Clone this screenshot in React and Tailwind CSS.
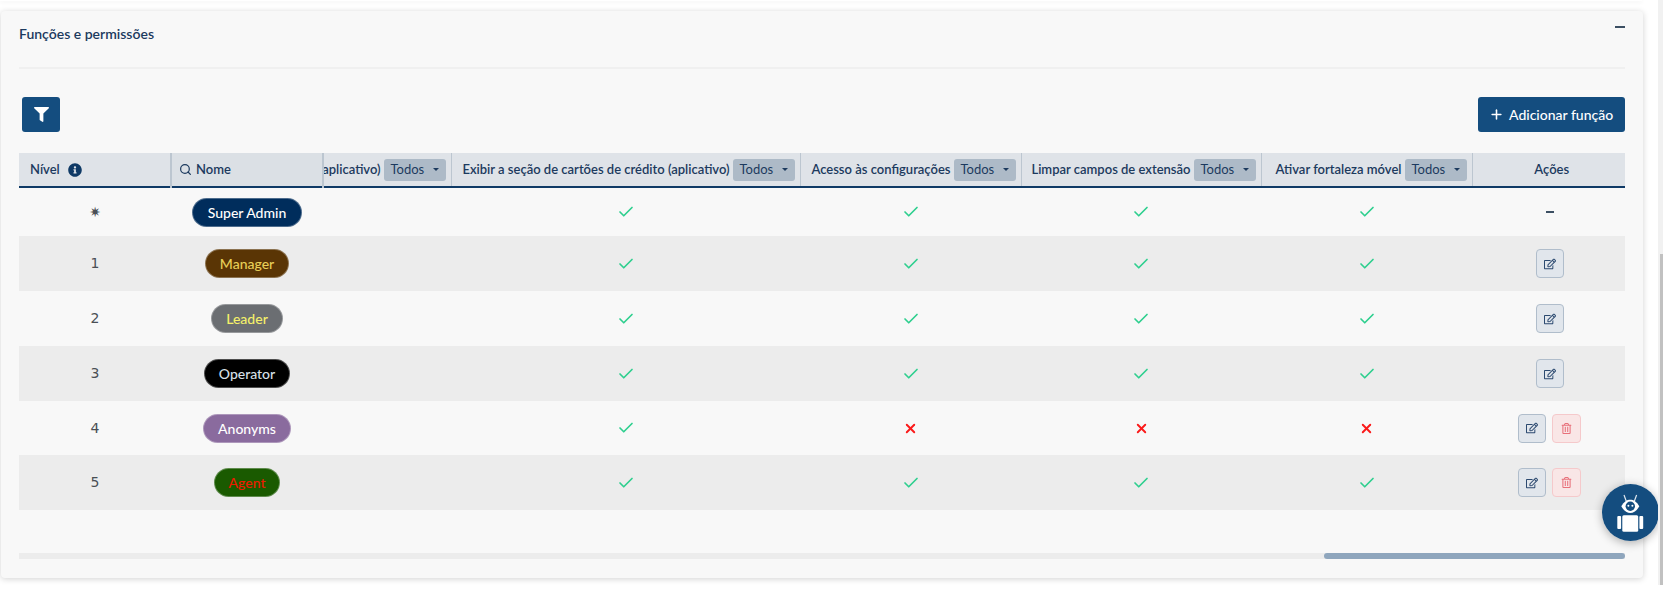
import React from "react";
import { Check, X, Plus, Search } from "lucide-react";
import { FaFilter, FaInfoCircle, FaRegEdit, FaRegTrashAlt } from "react-icons/fa";

const roles = [
  { level: "✷", name: "Super Admin", badge: "bg-[#002d5c] text-white px-[15px]", flags: [1, 1, 1, 1], actions: "none" },
  { level: "1", name: "Manager", badge: "bg-[#5a3505] text-[#e8cf58] px-[14px]", flags: [1, 1, 1, 1], actions: "edit" },
  { level: "2", name: "Leader", badge: "bg-[#6b6e72] text-[#f4f06a] px-[14px]", flags: [1, 1, 1, 1], actions: "edit" },
  { level: "3", name: "Operator", badge: "bg-black text-[#d8e0e8] px-[14px]", flags: [1, 1, 1, 1], actions: "edit" },
  { level: "4", name: "Anonyms", badge: "bg-[#8a6b9e] text-white px-[14px]", flags: [1, 0, 0, 0], actions: "both" },
  { level: "5", name: "Agent", badge: "bg-[#1a5a00] text-[#ee1a00] px-[14px]", flags: [1, 1, 1, 1], actions: "both" },
];

const rowHeights = ["h-[49px]", "h-[55px]", "h-[55px]", "h-[55px]", "h-[54px]", "h-[55px]"];

const columns = [
  "Exibir a seção de cartões de crédito (aplicativo)",
  "Acesso às configurações",
  "Limpar campos de extensão",
  "Ativar fortaleza móvel",
];

function TodosSelect() {
  return (
    <span className="flex h-[22px] w-[62px] shrink-0 items-center justify-between rounded-[3px] bg-[#adbac7] px-[7px] text-[13px] font-normal text-[#1c3a5e]">
      Todos
      <span className="h-0 w-0 border-x-[3px] border-t-[3px] border-x-transparent border-t-[#1c3a5e]" />
    </span>
  );
}

function EditButton() {
  return (
    <button className="flex h-[29px] w-[28px] items-center justify-center rounded-[4px] border border-[#b0bdcb] bg-[#e1e6ec] text-[#2c4a70]">
      <FaRegEdit size={12} />
    </button>
  );
}

function TrashButton() {
  return (
    <button className="flex h-[29px] w-[29px] items-center justify-center rounded-[4px] border border-[#f5c9cb] bg-[#f9e6e6] text-[#e8707a]">
      <FaRegTrashAlt size={11} />
    </button>
  );
}

function RobotIcon() {
  return (
    <svg width="57" height="57" viewBox="0 0 57 57">
      <circle cx="28.5" cy="28.5" r="28.5" fill="#144d7f" />
      <path d="M24.3 17.3 22 11M32.3 17.3 34.6 11" stroke="#dfe7ef" strokeWidth="1.2" />
      <path d="M19.3 22.3C22 17.5 25 15.7 28.3 15.7S34.6 17.5 37.3 22.3C34.6 27.2 31.6 29 28.3 29S22 27.2 19.3 22.3Z" fill="#fff" />
      <circle cx="28.3" cy="22.3" r="4.7" fill="#144d7f" />
      <circle cx="26.4" cy="21.8" r="1" fill="#fff" />
      <circle cx="30.4" cy="21.8" r="1" fill="#fff" />
      <rect x="20.3" y="31.3" width="15.9" height="16.4" rx="1.5" fill="#fff" />
      <rect x="15.3" y="32" width="3.8" height="13" rx="1" fill="#fff" />
      <rect x="37.4" y="32" width="3.8" height="13" rx="1" fill="#fff" />
    </svg>
  );
}

export default function App() {
  return (
    <div className="relative h-[602px] w-[1663px] overflow-hidden bg-white font-['Lato',sans-serif] text-[#1c3a5e]">
      {/* bottom edge of the card above */}
      <div className="h-px w-[1642px] shadow-[0_1px_4px_rgba(0,0,0,0.12)]" />

      <div className="ml-px mt-[10px] h-[567px] w-[1642px] rounded-[4px] bg-[#f8f8f8] px-[18px] shadow-[0_1px_6px_rgba(0,0,0,0.18)]">
        <div className="flex h-[58px] items-start justify-between border-b-2 border-[#f0f0f0] pt-[13px]">
          <h2 className="text-[14px] font-semibold leading-[20px]">Funções e permissões</h2>
          <span className="mt-[2px] h-[2px] w-[10px] bg-[#3c4f63]" />
        </div>

        <div className="mb-[21px] mt-[28px] flex items-center justify-between">
          <button className="ml-[3px] flex h-[35px] w-[38px] items-center justify-center rounded-[3px] bg-[#144d7f] text-white">
            <FaFilter size={15} />
          </button>
          <button className="flex h-[35px] w-[147px] items-center gap-[5px] rounded-[3px] bg-[#144d7f] pl-[11px] text-[14px] font-medium text-white">
            <Plus size={15} strokeWidth={2.5} />
            Adicionar função
          </button>
        </div>

        <table className="w-[1606px] table-fixed border-collapse text-[13px]">
          <colgroup>
            <col className="w-[152px]" />
            <col className="w-[152px]" />
            <col className="w-[128px]" />
            <col className="w-[349px]" />
            <col className="w-[221px]" />
            <col className="w-[240px]" />
            <col className="w-[211px]" />
            <col className="w-[153px]" />
          </colgroup>
          <thead>
            <tr className="h-[34px] border-b-2 border-[#0f3a66] bg-[#dfe3e8]">
              <th className="border-r-2 border-[#bcc6d0] pl-[11px] text-left font-semibold">
                <span className="flex items-center gap-[8px]">
                  Nível
                  <FaInfoCircle size={14} className="text-[#0f3a66]" />
                </span>
              </th>
              <th className="border-r-2 border-[#bcc6d0] bg-[#dbe0e5] pl-[7px] text-left font-semibold">
                <span className="flex items-center gap-[4px]">
                  <Search size={13} strokeWidth={2.25} />
                  Nome
                </span>
              </th>
              <th className="overflow-hidden border-r border-[#bcc6d0] pr-[5px] font-semibold">
                <span className="flex items-center justify-end gap-[3px] whitespace-nowrap">
                  <span>(aplicativo)</span>
                  <TodosSelect />
                </span>
              </th>
              {columns.map((label) => (
                <th key={label} className="border-r border-[#bcc6d0] pr-[5px] font-semibold">
                  <span className="flex items-center justify-end gap-[3px] whitespace-nowrap">
                    <span>{label}</span>
                    <TodosSelect />
                  </span>
                </th>
              ))}
              <th className="pl-[6px] text-center font-semibold">Ações</th>
            </tr>
          </thead>
          <tbody>
            {roles.map((role, i) => (
              <tr key={role.name} className={`${rowHeights[i]} ${i % 2 === 1 ? "bg-[#ececec]" : ""}`}>
                <td className="text-center font-['DejaVu_Sans','Lato',sans-serif] text-[14px] text-[#4a4f55]">{role.level}</td>
                <td className="text-center">
                  <span className={`inline-flex h-[29px] items-center rounded-full border border-white/30 text-[14px] font-medium ${role.badge}`}>
                    {role.name}
                  </span>
                </td>
                <td />
                {role.flags.map((ok, j) => (
                  <td key={j}>
                    <span className="flex justify-center">
                      {ok ? (
                        <Check size={18} strokeWidth={2.25} className="text-[#2fcf8f]" />
                      ) : (
                        <X size={15} strokeWidth={3} className="text-[#fb1a1a]" />
                      )}
                    </span>
                  </td>
                ))}
                <td>
                  <span className="flex items-center justify-center gap-[6px] pl-[2px]">
                    {role.actions === "none" && <span className="h-[2px] w-[8px] bg-[#3c4f63]" />}
                    {role.actions !== "none" && <EditButton />}
                    {role.actions === "both" && <TrashButton />}
                  </span>
                </td>
              </tr>
            ))}
          </tbody>
        </table>

        <div className="mt-[43px] flex h-[6px] justify-end bg-[#ececec]">
          <div className="h-[6px] w-[301px] rounded-[3px] bg-[#8fa6bd]" />
        </div>
      </div>

      {/* floating assistant button */}
      <div className="absolute left-[1602px] top-[484px] rounded-full shadow-[0_2px_10px_rgba(0,0,0,0.3)]">
        <RobotIcon />
      </div>

      {/* window scrollbar */}
      <div className="absolute right-0 top-0 flex h-[585px] w-[5px] flex-col bg-[#f1f1f1] pt-[254px]">
        <div className="ml-[2px] h-full bg-[#c1c1c1]" />
      </div>
    </div>
  );
}
